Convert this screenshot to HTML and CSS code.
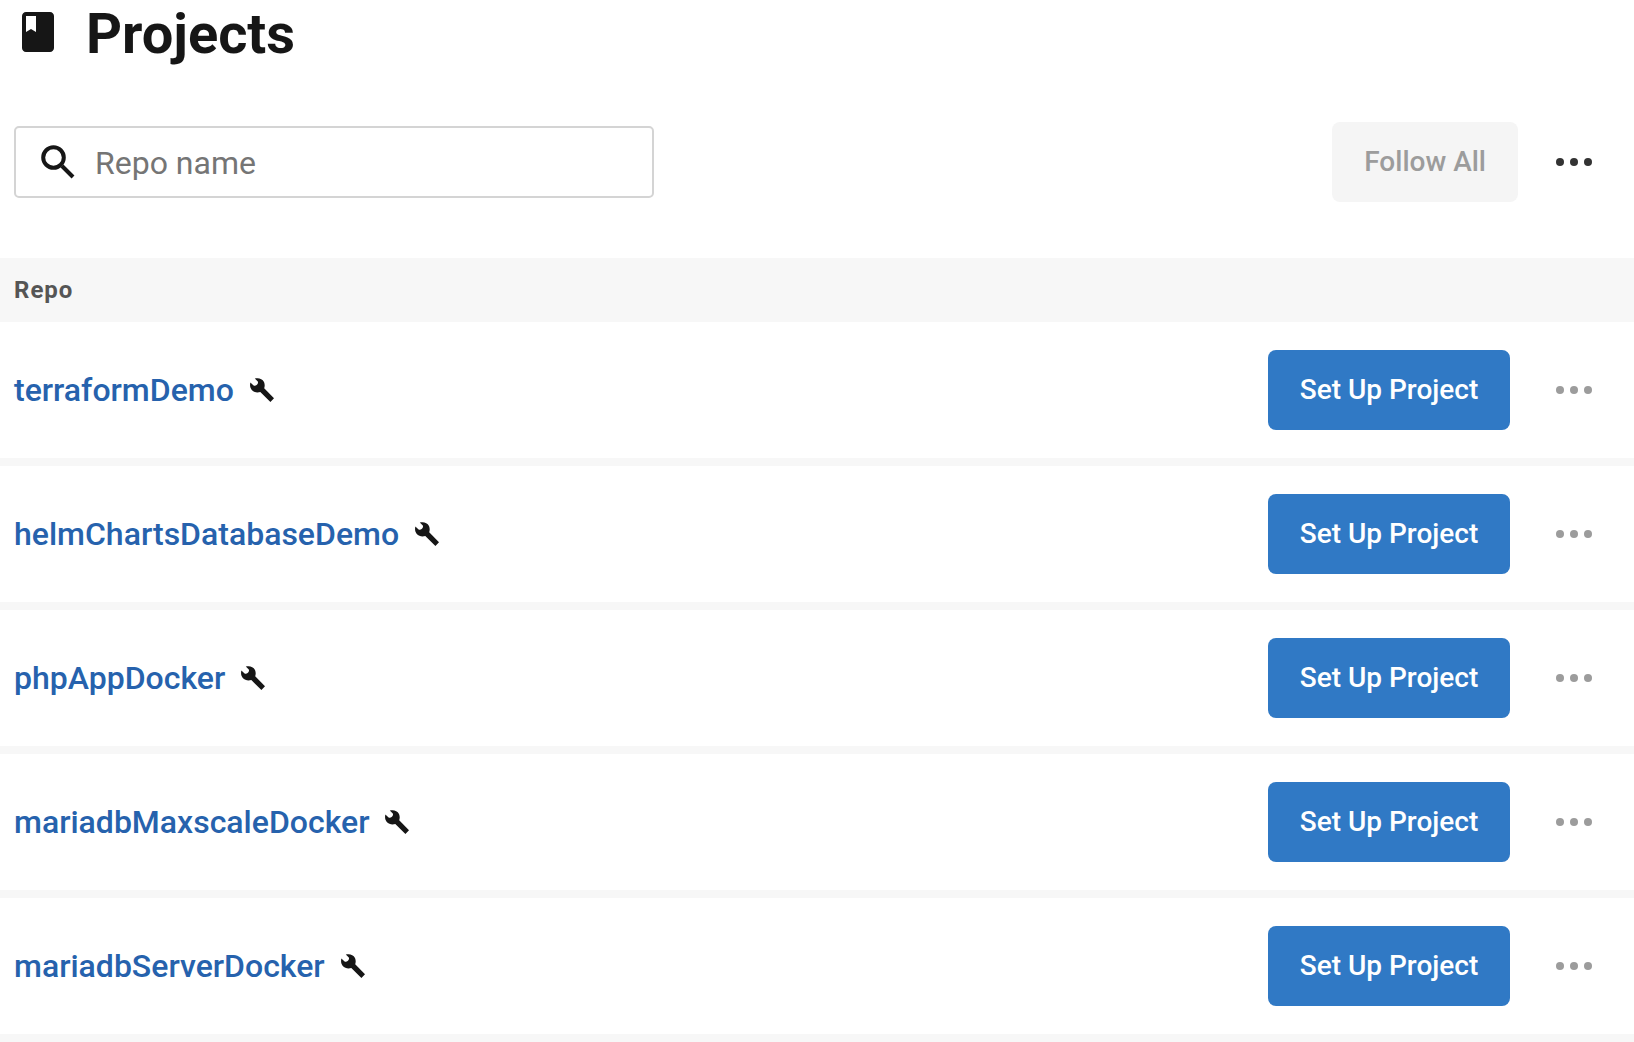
FILE: index.html
```html
<!DOCTYPE html>
<html lang="en">
<head>
  <meta charset="utf-8">
  <meta name="viewport" content="width=device-width, initial-scale=1">
  <title>Projects</title>
  <link rel="stylesheet" href="styles.css">
</head>
<body>
  <svg class="sprite" aria-hidden="true">
    <symbol id="icon-wrench" viewBox="0 0 24 24">
      <path d="M4.800.6C8-.5 12.200.3 14 4c.9 2.200.9 4.200.2 6.200L24 20.200 20.400 24 10.300 14c-3 1-6.300.4-8.700-2.300C0 9.500-.3 7 .4 4.400L3.600 7.500c2.100 1.200 5.300-1.800 4.200-4z"/>
    </symbol>
    <symbol id="icon-dots" viewBox="0 0 36 8">
      <circle cx="4" cy="4" r="4"/><circle cx="18" cy="4" r="4"/><circle cx="32" cy="4" r="4"/>
    </symbol>
  </svg>

  <header class="page-header">
    <svg class="page-icon" viewBox="0 0 24 24" aria-hidden="true">
      <path d="M18 2H6c-1.100 0-2 .9-2 2v16c0 1.100.9 2 2 2h12c1.100 0 2-.9 2-2V4c0-1.100-.9-2-2-2zM6 4h5v8l-2.500-1.500L6 12V4z"/>
    </svg>
    <h1 class="page-title">Projects</h1>
  </header>

  <main>
    <div class="toolbar">
      <label class="search">
        <svg class="search-icon" viewBox="0 0 34 34" aria-hidden="true">
          <circle cx="12.500" cy="12.500" r="10.300"/>
          <path d="M21 21L32 32"/>
        </svg>
        <input class="search-input" type="text" placeholder="Repo name" aria-label="Repo name">
      </label>
      <div class="toolbar-actions">
        <button class="button button-muted" type="button" disabled>Follow All</button>
        <button class="menu menu-dark" type="button" aria-label="More options"><svg class="dots"><use href="#icon-dots"/></svg></button>
      </div>
    </div>

    <table class="projects">
      <thead>
        <tr><th class="heading" colspan="2" scope="col">Repo</th></tr>
      </thead>
      <tbody>
        <tr>
          <td class="repo-cell"><div class="repo"><a class="repo-link" href="#">terraformDemo</a><svg class="wrench" aria-hidden="true"><use href="#icon-wrench"/></svg></div></td>
          <td class="action-cell"><div class="actions"><button class="button button-primary" type="button">Set Up Project</button><button class="menu" type="button" aria-label="More options for terraformDemo"><svg class="dots"><use href="#icon-dots"/></svg></button></div></td>
        </tr>
        <tr>
          <td class="repo-cell"><div class="repo"><a class="repo-link" href="#">helmChartsDatabaseDemo</a><svg class="wrench" aria-hidden="true"><use href="#icon-wrench"/></svg></div></td>
          <td class="action-cell"><div class="actions"><button class="button button-primary" type="button">Set Up Project</button><button class="menu" type="button" aria-label="More options for helmChartsDatabaseDemo"><svg class="dots"><use href="#icon-dots"/></svg></button></div></td>
        </tr>
        <tr>
          <td class="repo-cell"><div class="repo"><a class="repo-link" href="#">phpAppDocker</a><svg class="wrench" aria-hidden="true"><use href="#icon-wrench"/></svg></div></td>
          <td class="action-cell"><div class="actions"><button class="button button-primary" type="button">Set Up Project</button><button class="menu" type="button" aria-label="More options for phpAppDocker"><svg class="dots"><use href="#icon-dots"/></svg></button></div></td>
        </tr>
        <tr>
          <td class="repo-cell"><div class="repo"><a class="repo-link" href="#">mariadbMaxscaleDocker</a><svg class="wrench" aria-hidden="true"><use href="#icon-wrench"/></svg></div></td>
          <td class="action-cell"><div class="actions"><button class="button button-primary" type="button">Set Up Project</button><button class="menu" type="button" aria-label="More options for mariadbMaxscaleDocker"><svg class="dots"><use href="#icon-dots"/></svg></button></div></td>
        </tr>
        <tr>
          <td class="repo-cell"><div class="repo"><a class="repo-link" href="#">mariadbServerDocker</a><svg class="wrench" aria-hidden="true"><use href="#icon-wrench"/></svg></div></td>
          <td class="action-cell"><div class="actions"><button class="button button-primary" type="button">Set Up Project</button><button class="menu" type="button" aria-label="More options for mariadbServerDocker"><svg class="dots"><use href="#icon-dots"/></svg></button></div></td>
        </tr>
      </tbody>
    </table>
  </main>
</body>
</html>
```
FILE: styles.css
```css
* {
  box-sizing: border-box;
}

body {
  margin: 0;
  background: #fff;
  color: #161616;
  font-family: Roboto, "Liberation Sans", sans-serif;
}

svg {
  display: block;
  flex: none;
  fill: currentColor;
}

.sprite {
  display: none;
}

.page-header {
  display: flex;
  align-items: flex-start;
  gap: 24px;
  padding: 0 14px;
}

.page-icon {
  width: 48px;
  height: 48px;
  margin-top: 8px;
}

.page-title {
  margin: 0;
  font-size: 56px;
  font-weight: 700;
  line-height: 68px;
}

.toolbar {
  display: flex;
  align-items: center;
  justify-content: space-between;
  gap: 32px;
  padding: 54px 32px 56px 14px;
}

.search {
  display: flex;
  align-items: center;
  gap: 20px;
  flex: 0 1 640px;
  height: 72px;
  padding: 0 25px;
  border: 2px solid #d4d4d4;
  border-radius: 5px;
}

.search-icon {
  width: 34px;
  height: 34px;
  fill: none;
  stroke: currentColor;
  stroke-width: 4;
}

.search-input {
  flex: 1;
  min-width: 0;
  padding: 2px 0 0;
  border: 0;
  outline: 0;
  background: none;
  color: inherit;
  font: 400 32px/40px Roboto, "Liberation Sans", sans-serif;
}

.search-input::placeholder {
  color: #757575;
  opacity: 1;
}

.toolbar-actions {
  display: flex;
  align-items: center;
  gap: 28px;
}

.button {
  height: 80px;
  padding: 0 32px;
  border: 0;
  border-radius: 8px;
  font: 500 28px/32px Roboto, "Liberation Sans", sans-serif;
  white-space: nowrap;
}

.button-primary {
  width: 242px;
  padding: 0 24px;
  background: #3079c5;
  color: #fff;
}

.button-muted {
  background: #f5f5f5;
  color: #9c9c9c;
}

.menu {
  padding: 20px 10px;
  border: 0;
  background: none;
  color: #9c9c9c;
}

.menu-dark {
  color: #333;
}

.dots {
  width: 36px;
  height: 8px;
}

.projects {
  width: 100%;
  border-collapse: collapse;
}

.heading {
  height: 64px;
  padding: 0 14px;
  background: #f7f7f7;
  color: #555;
  font-size: 24px;
  font-weight: 700;
  line-height: 32px;
  letter-spacing: 1px;
  text-align: left;
}

.repo-cell,
.action-cell {
  padding: 28px 32px 36px 14px;
  box-shadow: inset 0 -8px #f7f7f7;
}

.repo,
.actions {
  display: flex;
  align-items: center;
}

.repo {
  gap: 16px;
}

.repo-link {
  color: #2662ad;
  font-size: 32px;
  font-weight: 500;
  line-height: 40px;
  text-decoration: none;
}

.wrench {
  width: 24px;
  height: 24px;
}

.actions {
  justify-content: flex-end;
  gap: 36px;
}
```
